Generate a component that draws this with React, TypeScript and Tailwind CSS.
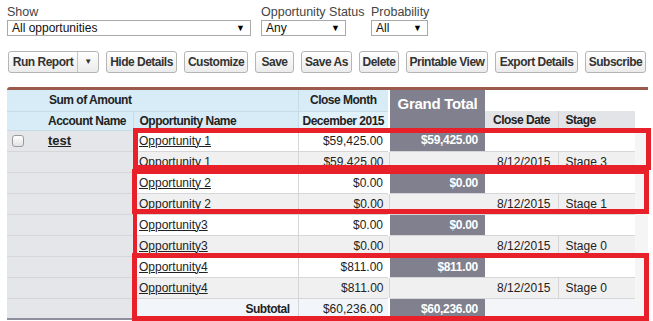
import React from "react";

const font = "font-['Liberation_Sans',Arial,sans-serif]";

interface Opp {
  name: string;
  amount: string;
  closeDate: string;
  stage: string;
}

const opportunities: Opp[] = [
  { name: "Opportunity 1", amount: "$59,425.00", closeDate: "8/12/2015", stage: "Stage 3" },
  { name: "Opportunity 2", amount: "$0.00", closeDate: "8/12/2015", stage: "Stage 1" },
  { name: "Opportunity3", amount: "$0.00", closeDate: "8/12/2015", stage: "Stage 0" },
  { name: "Opportunity4", amount: "$811.00", closeDate: "8/12/2015", stage: "Stage 0" },
];

// Petit select façon Salesforce
function Select({ label, value, width }: { label: string; value: string; width: string }) {
  return (
    <div className="flex flex-col">
      <span className="text-[12.5px] leading-[15px] text-[#444] whitespace-nowrap">{label}</span>
      <div
        className={`${width} h-[16px] border border-[#a9a9a9] bg-white flex items-center justify-between pl-[4px] pr-[5px] text-[12px] leading-[14px] text-[#111]`}
      >
        <span>{value}</span>
        <span className="text-[9px] leading-none text-black">▼</span>
      </div>
    </div>
  );
}

function Btn({ children, width }: { children: React.ReactNode; width: string }) {
  return (
    <button
      className={`${width} shrink-0 whitespace-nowrap h-[22px] rounded-[3px] border border-[#b5b5b5] bg-gradient-to-b from-white to-[#ebebeb] text-[12px] font-bold tracking-[-0.5px] text-[#333] leading-none`}
    >
      {children}
    </button>
  );
}

const cellBorder = "border-b border-[#d6d6d8]";
const hdr = "font-bold tracking-[-0.5px]";

export default function App() {
  return (
    <div className={`${font} bg-white w-[653px] h-[321px] overflow-hidden relative`}>
      {/* Filtres */}
      <div className="flex pl-[7px] pt-[5px]">
        <div className="w-[254px]">
          <Select label="Show" value="All opportunities" width="w-[244px]" />
        </div>
        <div className="w-[110px]">
          <Select label="Opportunity Status" value="Any" width="w-[85px]" />
        </div>
        <div>
          <Select label="Probability" value="All" width="w-[57px]" />
        </div>
      </div>

      {/* Boutons */}
      <div className="flex gap-[7px] pl-[8px] mt-[15px]">
        <div className="flex shrink-0 whitespace-nowrap w-[91px] h-[22px] rounded-[3px] border border-[#b5b5b5] bg-gradient-to-b from-white to-[#ebebeb] text-[12px] font-bold tracking-[-0.5px] text-[#333]">
          <span className="flex flex-1 items-center justify-center border-r border-[#c4c4c4]">Run Report</span>
          <span className="flex items-center justify-center w-[20px] text-[8px]">▼</span>
        </div>
        <Btn width="w-[71px]">Hide Details</Btn>
        <Btn width="w-[64px]">Customize</Btn>
        <Btn width="w-[39px]">Save</Btn>
        <Btn width="w-[51px]">Save As</Btn>
        <Btn width="w-[40px]">Delete</Btn>
        <Btn width="w-[82px]">Printable View</Btn>
        <Btn width="w-[83px]">Export Details</Btn>
        <Btn width="w-[61px]">Subscribe</Btn>
      </div>

      {/* Rapport matriciel */}
      <div className="ml-[7px] mt-[14px] w-[641px] border-t-[3px] border-[#9b5a4b] rounded-tl-[3px] bg-[#f5f5f6]">
        <table className="table-fixed border-collapse text-[12px] text-[#222]">
          <colgroup>
            <col className="w-[36px]" />
            <col className="w-[90px]" />
            <col className="w-[165px]" />
            <col className="w-[91px]" />
            <col className="w-[96px]" />
            <col className="w-[73px]" />
            <col className="w-[77px]" />
            <col className="w-[13px]" />
          </colgroup>
          <thead>
            <tr className="h-[21px]">
              <th className="bg-[#d7ecf6] border-b border-[#c5dbe6]"></th>
              <th colSpan={2} className={`bg-[#d7ecf6] border-b border-[#c5dbe6] text-left pl-[6px] ${hdr}`}>
                Sum of Amount
              </th>
              <th className={`bg-[#d7ecf6] border-b border-l border-[#c5dbe6] text-center ${hdr}`}>Close Month</th>
              <th
                rowSpan={2}
                className="bg-[#80808e] border-l-2 border-white align-top pt-[3px] text-center text-[15px] font-bold tracking-[-0.3px] text-white"
              >
                Grand Total
              </th>
              <th colSpan={3} className="bg-white"></th>
            </tr>
            <tr className="h-[19px]">
              <th className="bg-[#d7ecf6] border-b border-[#c5dbe6]"></th>
              <th className={`bg-[#d7ecf6] border-b border-[#c5dbe6] text-left pl-[5px] ${hdr}`}>Account Name</th>
              <th className={`bg-[#d7ecf6] border-b border-l border-[#c5dbe6] text-left pl-[6px] ${hdr}`}>
                Opportunity Name
              </th>
              <th className={`bg-[#e2f2fa] border-b border-l border-[#c5dbe6] text-center ${hdr}`}>December 2015</th>
              <th className={`bg-[#e3e4e7] border-b border-[#d0d0d3] text-left pl-[8px] ${hdr}`}>Close Date</th>
              <th className={`bg-[#e3e4e7] border-b border-l border-[#d0d0d3] text-left pl-[7px] ${hdr}`}>Stage</th>
              <th className="bg-white"></th>
            </tr>
          </thead>
          <tbody>
            {opportunities.map((opp, i) => (
              <React.Fragment key={opp.name}>
                <tr className="h-[21px]">
                  <td className={`bg-[#e5e6e9] ${cellBorder}`}>
                    {i === 0 && (
                      <div className="ml-[5px] w-[12px] h-[12px] rounded-[3px] border border-[#9a9a9a] bg-gradient-to-b from-white to-[#e2e2e2]" />
                    )}
                  </td>
                  <td className={`bg-[#e5e6e9] ${cellBorder} pl-[5px]`}>
                    {i === 0 && <span className="text-[13px] font-bold underline">test</span>}
                  </td>
                  <td className={`bg-white ${cellBorder} pl-[6px]`}>
                    <span className="underline">{opp.name}</span>
                  </td>
                  <td className={`bg-white ${cellBorder} border-l text-right pr-[5px]`}>{opp.amount}</td>
                  <td className="bg-[#80808e] border-b border-[#d6d6d8] border-l-2 border-l-white text-right pr-[7px] font-bold tracking-[-0.3px] text-white">
                    {opp.amount}
                  </td>
                  <td className={`bg-white ${cellBorder}`}></td>
                  <td className={`bg-white ${cellBorder}`}></td>
                  <td className="bg-[#f5f5f6]"></td>
                </tr>
                <tr className="h-[21px]">
                  <td className={`bg-[#e5e6e9] ${cellBorder}`}></td>
                  <td className={`bg-[#e5e6e9] ${cellBorder}`}></td>
                  <td className={`bg-[#f0f0f1] ${cellBorder} pl-[6px]`}>
                    <span className="underline">{opp.name}</span>
                  </td>
                  <td className={`bg-[#f0f0f1] ${cellBorder} border-l text-right pr-[5px]`}>{opp.amount}</td>
                  <td className={`bg-[#f0f0f1] ${cellBorder} border-l`}></td>
                  <td className={`bg-[#f0f0f1] ${cellBorder} text-right pr-[7px]`}>{opp.closeDate}</td>
                  <td className={`bg-[#f0f0f1] ${cellBorder} border-l pl-[7px]`}>{opp.stage}</td>
                  <td className="bg-[#f5f5f6]"></td>
                </tr>
              </React.Fragment>
            ))}
            <tr className="h-[21px]">
              <td className="bg-[#e5e6e9] border-b-2 border-[#8e8e9c]"></td>
              <td className="bg-[#e5e6e9] border-b-2 border-[#8e8e9c]"></td>
              <td className={`bg-[#f2f5f9] text-right pr-[8px] ${hdr}`}>Subtotal</td>
              <td className="bg-[#f2f5f9] border-l border-[#d6d6d8] text-right pr-[5px]">$60,236.00</td>
              <td className="bg-[#80808e] border-l-2 border-white text-right pr-[7px] font-bold tracking-[-0.3px] text-white">$60,236.00</td>
              <td colSpan={2} className="bg-[#f3f5f9]"></td>
              <td className="bg-[#f5f5f6]"></td>
            </tr>
          </tbody>
        </table>
      </div>

      {/* Annotations rouges par-dessus la capture */}
      <div className="absolute left-[133px] top-[128px] w-[518px] h-[42px] border-[5px] border-[#e8202a]" />
      <div className="absolute left-[132px] top-[169px] w-[517px] h-[45px] border-[5px] border-[#e8202a]" />
      <div className="absolute left-[133px] top-[213px] w-[4px] h-[42px] bg-[#e8202a]" />
      <div className="absolute left-[132px] top-[253px] w-[517px] h-[68px] border-[5px] border-[#e8202a]" />
    </div>
  );
}
